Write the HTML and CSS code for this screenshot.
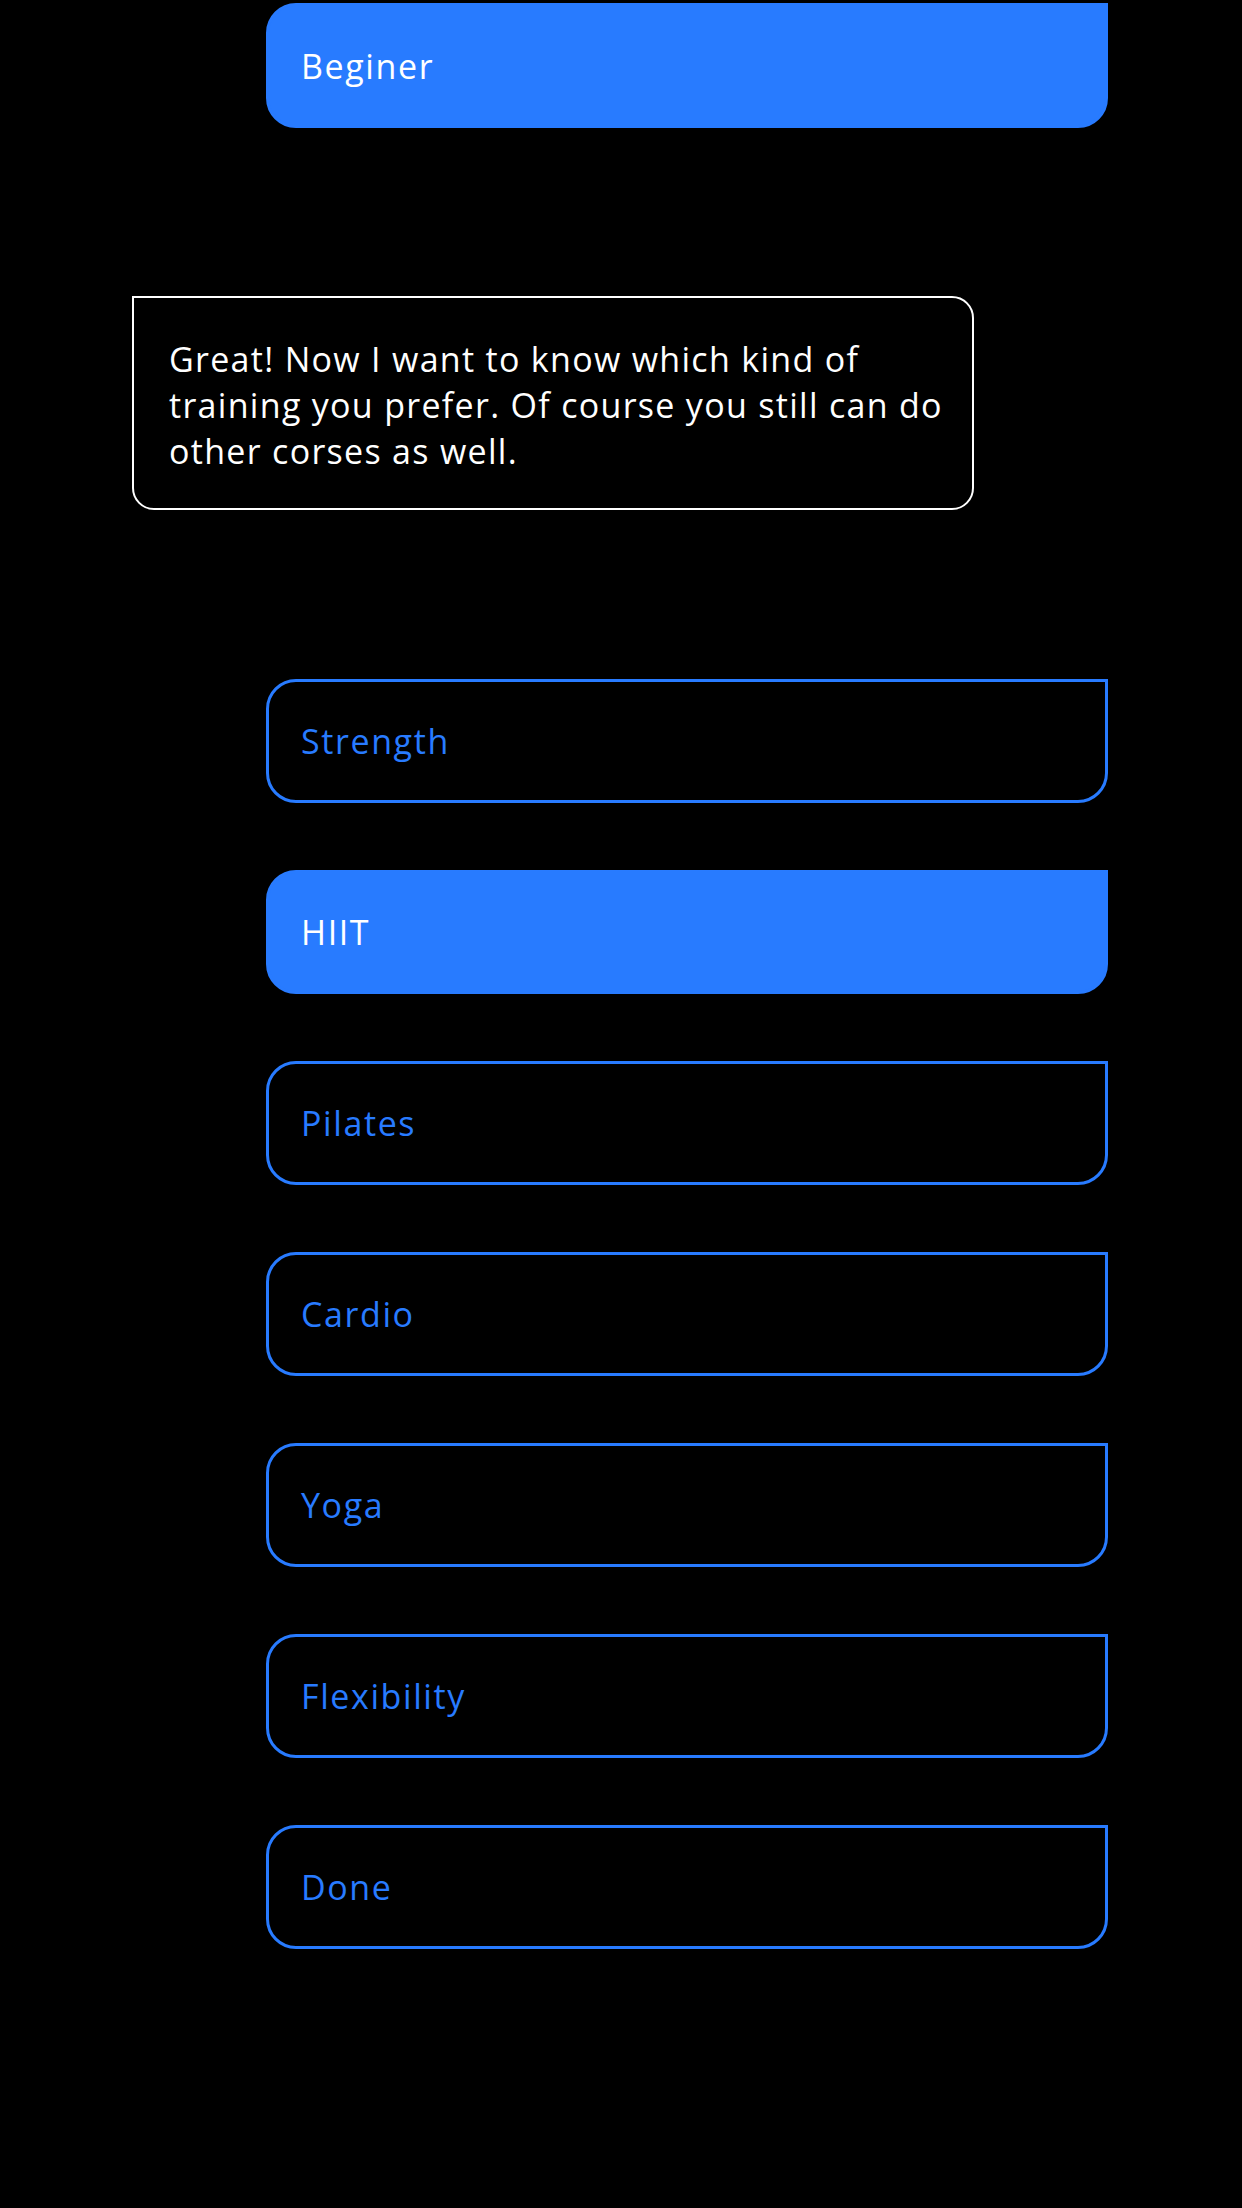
FILE: index.html
```html
<!DOCTYPE html>
<html lang="en">
<head>
<meta charset="utf-8">
<title>Training preferences</title>
<link rel="stylesheet" href="styles.css">
</head>
<body>
<main class="chat">
  <div class="reply reply--filled first"><span class="label">Beginer</span></div>

  <div class="bubble">
    <p class="bubble-text">Great! Now I want to know which kind of<br>training you prefer. Of course you still can do<br>other corses as well.</p>
  </div>

  <ul class="options">
    <li class="reply"><span class="label">Strength</span></li>
    <li class="reply reply--filled"><span class="label">HIIT</span></li>
    <li class="reply"><span class="label">Pilates</span></li>
    <li class="reply"><span class="label">Cardio</span></li>
    <li class="reply"><span class="label">Yoga</span></li>
    <li class="reply"><span class="label">Flexibility</span></li>
    <li class="reply"><span class="label">Done</span></li>
  </ul>
</main>
</body>
</html>
```

FILE: styles.css
```css
html, body {
  margin: 0;
  padding: 0;
  background: #000;
}

body {
  width: 1242px;
  height: 2208px;
  overflow: hidden;
  font-family: "Open Sans", "Noto Sans", sans-serif;
}

.chat {
  display: flex;
  flex-direction: column;
  padding-top: 3px;
}

.reply {
  box-sizing: border-box;
  width: 842px;
  height: 124px;
  margin-left: 266px;
  display: flex;
  align-items: center;
  padding-left: 32px;
  border: 3px solid #287bff;
  border-radius: 30px 0 30px 30px;
  color: #287bff;
  font-size: 34px;
  letter-spacing: 1.6px;
  list-style: none;
}

.reply--filled {
  background: #287bff;
  color: #fff;
}

.first {
  height: 125px;
}

.bubble {
  box-sizing: border-box;
  width: 842px;
  height: 214px;
  margin-left: 132px;
  margin-top: 168px;
  padding: 38px 20px 0 35px;
  border: 2px solid #fff;
  border-radius: 0 22px 22px 22px;
}

.bubble-text {
  margin: 0;
  color: #fff;
  font-size: 34px;
  line-height: 46px;
  letter-spacing: 1.3px;
  white-space: nowrap;
}

.options {
  margin: 169px 0 0;
  padding: 0;
  display: flex;
  flex-direction: column;
  gap: 67px;
}
```
